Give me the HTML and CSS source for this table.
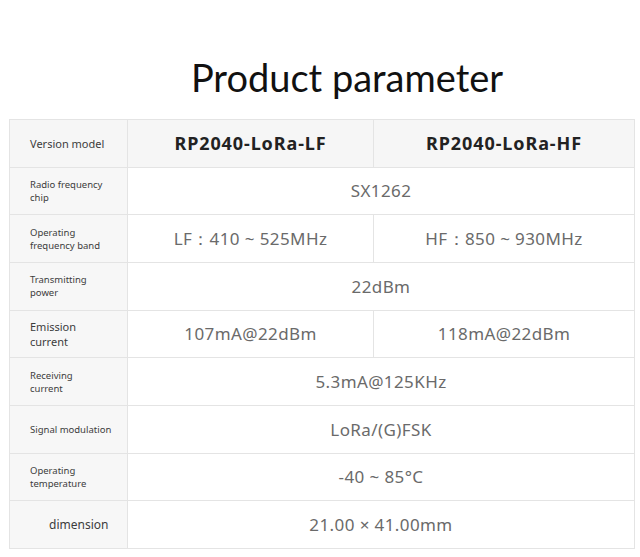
FILE: index.html
```html
<!DOCTYPE html>
<html>
<head>
<meta charset="utf-8">
<link rel="stylesheet" href="styles.css">
</head>
<body>
<h1 class="title">Product parameter</h1>
<table class="params">
  <colgroup>
    <col class="c1">
    <col class="c2">
    <col class="c3">
  </colgroup>
  <tr class="head">
    <th class="label label-md">Version model</th>
    <th class="model">RP2040-LoRa-LF</th>
    <th class="model">RP2040-LoRa-HF</th>
  </tr>
  <tr>
    <td class="label">Radio frequency<br>chip</td>
    <td class="val" colspan="2">SX1262</td>
  </tr>
  <tr>
    <td class="label">Operating<br>frequency band</td>
    <td class="val">LF：410 ~ 525MHz</td>
    <td class="val">HF：850 ~ 930MHz</td>
  </tr>
  <tr>
    <td class="label">Transmitting<br>power</td>
    <td class="val" colspan="2">22dBm</td>
  </tr>
  <tr>
    <td class="label label-md">Emission<br>current</td>
    <td class="val">107mA@22dBm</td>
    <td class="val">118mA@22dBm</td>
  </tr>
  <tr>
    <td class="label">Receiving<br>current</td>
    <td class="val" colspan="2">5.3mA@125KHz</td>
  </tr>
  <tr>
    <td class="label">Signal modulation</td>
    <td class="val" colspan="2">LoRa/(G)FSK</td>
  </tr>
  <tr>
    <td class="label">Operating<br>temperature</td>
    <td class="val" colspan="2">-40 ~ 85°C</td>
  </tr>
  <tr>
    <td class="label label-dim">dimension</td>
    <td class="val" colspan="2">21.00 × 41.00mm</td>
  </tr>
</table>
</body>
</html>
```
FILE: styles.css
```css
html, body {
  margin: 0;
  padding: 0;
  background: #ffffff;
}
body {
  width: 640px;
  height: 557px;
  overflow: hidden;
  font-family: "Noto Sans", "Open Sans", sans-serif;
}
.title {
  margin: 0;
  height: 119px;
  box-sizing: border-box;
  padding-top: 53px;
  padding-left: 54px;
  text-align: center;
  font-family: "Lato", "Open Sans", sans-serif;
  font-weight: 400;
  font-size: 38px;
  line-height: 48px;
  color: #111111;
}
.params {
  margin-left: 9px;
  width: 625px;
  border-collapse: collapse;
  table-layout: fixed;
}
.c1 { width: 118px; }
.c2 { width: 246px; }
.c3 { width: 261px; }
.params tr {
  height: 47.67px;
}
.params th, .params td {
  border: 1px solid #e4e4e4;
  padding: 0;
  vertical-align: middle;
}
.head th {
  background: #f6f6f6;
}
.label {
  background: #f7f7f7;
  text-align: left;
  padding-left: 20px !important;
  font-size: 9.5px;
  line-height: 13px;
  color: #3c3c3c;
  font-weight: 400;
}
.label-md {
  font-size: 11px;
  line-height: 15px;
}
.label-dim {
  font-size: 12px;
  padding-left: 39px !important;
}
.model {
  font-size: 18px;
  font-weight: 700;
  letter-spacing: 0.9px;
  color: #222222;
  text-align: center;
}
.val {
  text-align: center;
  font-size: 17px;
  letter-spacing: 0.4px;
  color: #6a6a6a;
}
```
